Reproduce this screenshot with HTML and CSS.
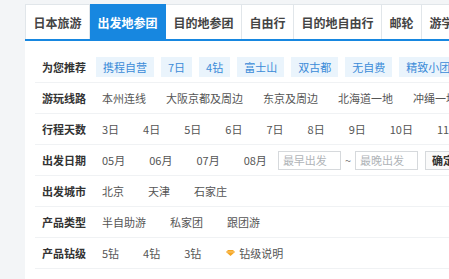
FILE: index.html
```html
<!DOCTYPE html>
<html lang="zh-CN">
<head>
    <meta charset="UTF-8">
    <title>出发地参团</title>
    <link rel="stylesheet" href="styles.css">
</head>
<body>
    <div class="panel">
        <div class="tabs">
            <a class="tab">日本旅游</a>
            <a class="tab active">出发地参团</a>
            <a class="tab">目的地参团</a>
            <a class="tab">自由行</a>
            <a class="tab">目的地自由行</a>
            <a class="tab">邮轮</a>
            <a class="tab">游学</a>
        </div>

        <div class="filters">
            <div class="row">
                <span class="label">为您推荐</span>
                <div class="items tags">
                    <a class="item tag">携程自营</a>
                    <a class="item tag">7日</a>
                    <a class="item tag">4钻</a>
                    <a class="item tag">富士山</a>
                    <a class="item tag">双古都</a>
                    <a class="item tag">无自费</a>
                    <a class="item tag">精致小团</a>
                </div>
            </div>
            <div class="row">
                <span class="label">游玩线路</span>
                <div class="items routes">
                    <a class="item">本州连线</a>
                    <a class="item">大阪京都及周边</a>
                    <a class="item">东京及周边</a>
                    <a class="item">北海道一地</a>
                    <a class="item">冲绳一地</a>
                </div>
            </div>
            <div class="row">
                <span class="label">行程天数</span>
                <div class="items">
                    <a class="item">3日</a>
                    <a class="item">4日</a>
                    <a class="item">5日</a>
                    <a class="item">6日</a>
                    <a class="item">7日</a>
                    <a class="item">8日</a>
                    <a class="item">9日</a>
                    <a class="item">10日</a>
                    <a class="item">11日</a>
                </div>
            </div>
            <div class="row">
                <span class="label">出发日期</span>
                <div class="items">
                    <a class="item">05月</a>
                    <a class="item">06月</a>
                    <a class="item">07月</a>
                    <a class="item">08月</a>
                    <div class="range">
                        <input class="date" type="text" placeholder="最早出发">
                        <span class="tilde">~</span>
                        <input class="date" type="text" placeholder="最晚出发">
                        <button class="ok">确定</button>
                    </div>
                </div>
            </div>
            <div class="row">
                <span class="label">出发城市</span>
                <div class="items">
                    <a class="item">北京</a>
                    <a class="item">天津</a>
                    <a class="item">石家庄</a>
                </div>
            </div>
            <div class="row">
                <span class="label">产品类型</span>
                <div class="items">
                    <a class="item">半自助游</a>
                    <a class="item">私家团</a>
                    <a class="item">跟团游</a>
                </div>
            </div>
            <div class="row">
                <span class="label">产品钻级</span>
                <div class="items">
                    <a class="item">5钻</a>
                    <a class="item">4钻</a>
                    <a class="item">3钻</a>
                    <a class="item help">
                        <svg width="11" height="8" viewBox="0 0 11 8">
                            <path d="M1 3 L3 1 H8 L10 3 L5.5 7 Z" fill="#f5a623"/>
                            <path d="M1 3 H10" stroke="#fbd38d" stroke-width="0.8"/>
                        </svg>
                        钻级说明
                    </a>
                </div>
            </div>
        </div>
    </div>
</body>
</html>
```

FILE: styles.css
```css
body {
    margin: 0;
    background-color: #f3f5f7;
    font-family: "Noto Sans CJK SC", "Noto Sans", sans-serif;
    font-size: 11px;
    color: #555;
    overflow: hidden;
}

.panel {
    margin: 4px 0 0 25px;
    background-color: white;
    height: 275px;
    width: 600px;
}

.tabs {
    display: flex;
    height: 35px;
    border-bottom: 2px solid #1787e0;
    background-color: #f3f5f7;
}

.tab {
    display: flex;
    align-items: center;
    padding: 0 7.5px;
    font-size: 12px;
    font-weight: bold;
    color: #444;
    background-color: white;
    border-top: 1px solid #e1e6ea;
    border-right: 1px solid #e1e6ea;
    white-space: nowrap;
}

.tab:first-child {
    border-left: 1px solid #e1e6ea;
}

.tab.active {
    background-color: #1787e0;
    border-color: #1787e0;
    color: white;
}

.filters {
    padding-top: 11px;
}

.row {
    display: flex;
    align-items: center;
    height: 30px;
    margin-left: 10px;
    padding-left: 7px;
    border-bottom: 1px solid #f0f2f4;
}

.label {
    width: 54px;
    flex-shrink: 0;
    font-weight: bold;
    color: #333;
}

.items {
    display: flex;
    align-items: center;
    gap: 12px;
    white-space: nowrap;
}

.item {
    display: flex;
    align-items: center;
    padding: 0 6px;
    color: #555;
}

.tags {
    gap: 7px;
}

.tag {
    height: 20px;
    padding: 0 7px;
    background-color: #eaf4fc;
    color: #3a8bd8;
}

.routes {
    gap: 8px;
}

.help svg {
    margin-right: 3px;
}

.range {
    display: flex;
    align-items: center;
    margin-left: -7px;
}

.date {
    box-sizing: border-box;
    width: 63px;
    height: 19px;
    padding: 0 4px;
    border: 1px solid #d6d9dc;
    font-family: inherit;
    font-size: 11px;
    color: #555;
}

.date::placeholder {
    color: #b0b4b8;
}

.tilde {
    margin: 0 4px;
    color: #777;
}

.ok {
    margin-left: 7px;
    height: 19px;
    padding: 0 6px;
    border: 1px solid #d6d9dc;
    background-color: #fafafa;
    font-family: inherit;
    font-size: 11px;
    font-weight: bold;
    color: #333;
}
```
